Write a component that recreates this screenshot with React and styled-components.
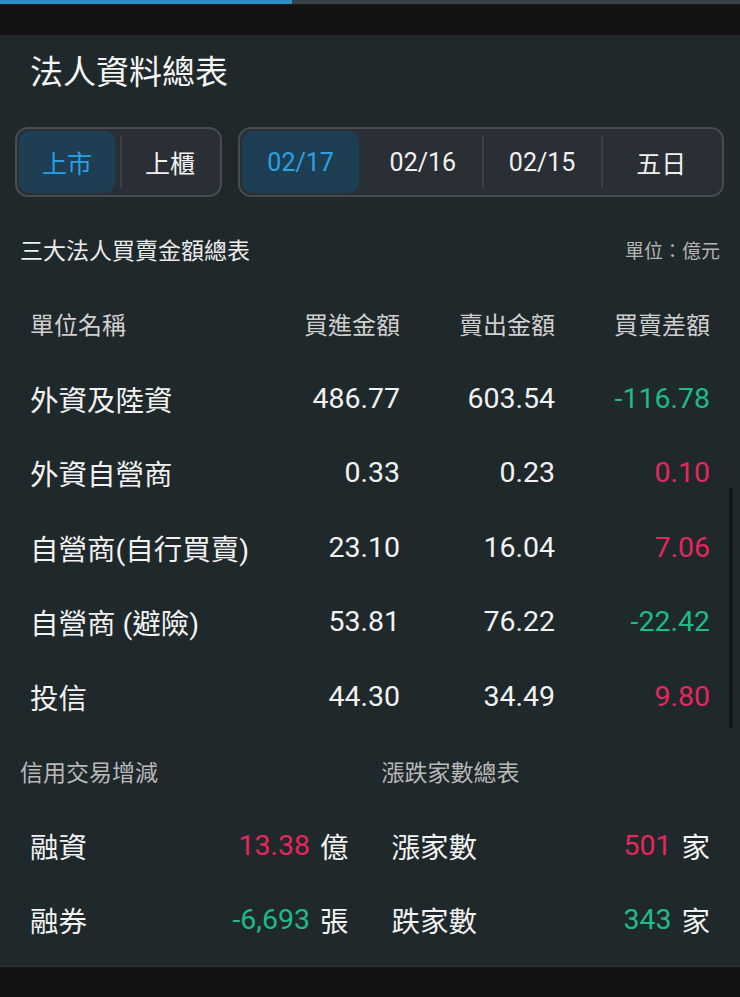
import React from 'react';
import styled, { createGlobalStyle } from 'styled-components';

const GlobalStyle = createGlobalStyle`
  html, body {
    margin: 0;
    padding: 0;
    background: #131313;
  }
  body {
    font-family: "Roboto", "Noto Sans CJK TC", sans-serif;
    color: #f2f2f2;
  }
`;

const markets = [
  { label: '上市', active: true },
  { label: '上櫃' },
];

const dates = [
  { label: '02/17', active: true },
  { label: '02/16' },
  { label: '02/15', divider: true },
  { label: '五日', divider: true },
];

const institutions = [
  { name: '外資及陸資', buy: '486.77', sell: '603.54', diff: '-116.78' },
  { name: '外資自營商', buy: '0.33', sell: '0.23', diff: '0.10' },
  { name: '自營商(自行買賣)', buy: '23.10', sell: '16.04', diff: '7.06' },
  { name: '自營商 (避險)', buy: '53.81', sell: '76.22', diff: '-22.42' },
  { name: '投信', buy: '44.30', sell: '34.49', diff: '9.80' },
];

const credit = [
  { name: '融資', value: '13.38', unit: '億', up: true },
  { name: '融券', value: '-6,693', unit: '張', up: false },
];

const breadth = [
  { name: '漲家數', value: '501', unit: '家', up: true },
  { name: '跌家數', value: '343', unit: '家', up: false },
];

function App() {
  return (
    <Page>
      <GlobalStyle />
      <Progress>
        <ProgressFill style={{ width: 292 }} />
      </Progress>
      <TopBand />
      <Panel>
        <Title>法人資料總表</Title>
        <Controls>
          <Segment width={207}>
            {markets.map((m, i) => (
              <React.Fragment key={m.label}>
                {i > 0 && <Divider />}
                <SegItem active={m.active}>{m.label}</SegItem>
              </React.Fragment>
            ))}
          </Segment>
          <Segment width={486}>
            {dates.map((d) => (
              <React.Fragment key={d.label}>
                {d.divider && <Divider />}
                <SegItem active={d.active}>{d.label}</SegItem>
              </React.Fragment>
            ))}
          </Segment>
        </Controls>

        <SectionRow>
          <SectionTitle>三大法人買賣金額總表</SectionTitle>
          <UnitNote>單位：億元</UnitNote>
        </SectionRow>

        <TableRow header>
          <Cell>單位名稱</Cell>
          <Num>買進金額</Num>
          <Num>賣出金額</Num>
          <Num>買賣差額</Num>
        </TableRow>
        {institutions.map((r) => (
          <TableRow key={r.name}>
            <Cell>{r.name}</Cell>
            <Num>{r.buy}</Num>
            <Num>{r.sell}</Num>
            <Num tone={r.diff.startsWith('-') ? 'down' : 'up'}>{r.diff}</Num>
          </TableRow>
        ))}

        <SplitRow>
          <SubTitle>信用交易增減</SubTitle>
          <SubTitle>漲跌家數總表</SubTitle>
        </SplitRow>
        {credit.map((c, i) => (
          <SplitRow key={c.name}>
            <Stat>
              <StatName>{c.name}</StatName>
              <StatValue tone={c.up ? 'up' : 'down'}>{c.value}</StatValue>
              <StatUnit>{c.unit}</StatUnit>
            </Stat>
            <Stat>
              <StatName>{breadth[i].name}</StatName>
              <StatValue tone={breadth[i].up ? 'up' : 'down'}>{breadth[i].value}</StatValue>
              <StatUnit>{breadth[i].unit}</StatUnit>
            </Stat>
          </SplitRow>
        ))}
        <Scrollbar />
      </Panel>
    </Page>
  );
}

export default App;

const Page = styled.div`
  width: 740px;
  min-height: 997px;
  background: #131313;
  overflow: hidden;
`;

const Progress = styled.div`
  height: 4px;
  background: #394245;
  border-bottom: 1px solid #1a1d1e;
`;

const ProgressFill = styled.div`
  height: 4px;
  background: #2b8fc8;
`;

const TopBand = styled.div`
  height: 30px;
  background: #131313;
`;

const Panel = styled.div`
  position: relative;
  background: #1f282b;
  padding: 16px 0 9px;
  border-bottom: 1px solid #2a3336;
`;

const Title = styled.h1`
  margin: 0 0 0 30px;
  font-size: 33px;
  line-height: 44px;
  font-weight: 400;
  color: #f5f5f5;
`;

const Controls = styled.div`
  display: flex;
  gap: 16px;
  padding: 32px 16px 0 15px;
`;

const Segment = styled.div`
  width: ${(p) => p.width}px;
  height: 70px;
  box-sizing: border-box;
  display: flex;
  align-items: center;
  padding: 2px;
  border: 2px solid #464c52;
  border-radius: 13px;
  background: #2a2f35;
`;

const SegItem = styled.div`
  flex: 1;
  height: 62px;
  display: flex;
  align-items: center;
  justify-content: center;
  border-radius: 11px;
  font-size: 25px;
  color: ${(p) => (p.active ? '#2ba0e2' : '#f0f0f0')};
  background: ${(p) => (p.active ? '#1e3e54' : 'transparent')};
  margin-right: ${(p) => (p.active ? '5px' : '0')};
`;

const Divider = styled.div`
  width: 2px;
  height: 52px;
  background: #3c4147;
`;

const SectionRow = styled.div`
  height: 74.5px;
  margin-top: 15px;
  display: flex;
  align-items: center;
  justify-content: space-between;
  padding: 0 20px;
`;

const SectionTitle = styled.div`
  font-size: 23px;
  color: #ececec;
`;

const UnitNote = styled.div`
  font-size: 19px;
  color: #b4b4b4;
`;

const TableRow = styled.div`
  height: 74.5px;
  display: grid;
  grid-template-columns: minmax(0, 1fr) 155px 155px 155px;
  align-items: center;
  padding: 0 30px;
  font-size: ${(p) => (p.header ? '24px' : '28.5px')};
  color: ${(p) => (p.header ? '#cfcfcf' : '#f2f2f2')};
`;

const Cell = styled.div`
  white-space: nowrap;
  min-width: 0;
`;

const toneColor = (tone) =>
  tone === 'up' ? '#e5275d' : tone === 'down' ? '#1fbb86' : 'inherit';

const Num = styled.div`
  text-align: right;
  color: ${(p) => toneColor(p.tone)};
`;

const SplitRow = styled.div`
  height: 74.5px;
  display: grid;
  grid-template-columns: 1fr 1fr;
  column-gap: 43px;
  align-items: center;
  padding: 0 30px;
`;

const SubTitle = styled.div`
  margin-left: -10px;
  font-size: 23px;
  color: #b9b9b9;
`;

const Stat = styled.div`
  display: flex;
  align-items: center;
  font-size: 28.5px;
  color: #f2f2f2;
`;

const StatName = styled.div`
  flex: 1;
`;

const StatValue = styled.div`
  color: ${(p) => toneColor(p.tone)};
`;

const StatUnit = styled.div`
  margin-left: 10px;
`;

const Scrollbar = styled.div`
  position: absolute;
  right: 7px;
  top: 452px;
  width: 4px;
  height: 241px;
  border-radius: 2px;
  background: #131719;
`;
